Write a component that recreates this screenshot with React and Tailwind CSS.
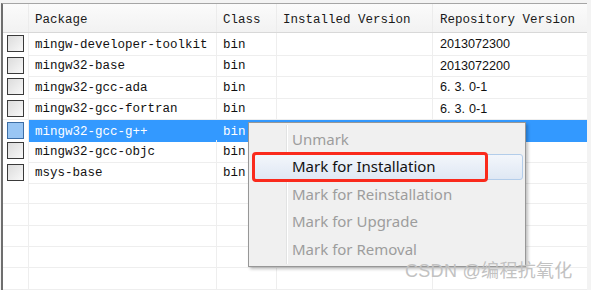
import React from "react";

const rows = [
  { name: "mingw-developer-toolkit", cls: "bin", repo: "2013072300" },
  { name: "mingw32-base", cls: "bin", repo: "2013072200" },
  { name: "mingw32-gcc-ada", cls: "bin", repo: "6.3.0-1" },
  { name: "mingw32-gcc-fortran", cls: "bin", repo: "6.3.0-1" },
  { name: "mingw32-gcc-g++", cls: "bin", repo: "", selected: true },
  { name: "mingw32-gcc-objc", cls: "bin", repo: "" },
  { name: "msys-base", cls: "bin", repo: "" },
  {}, {}, {}, {}, {},
];

const menu = [
  { label: "Unmark" },
  { label: "Mark for Installation", active: true },
  { label: "Mark for Reinstallation" },
  { label: "Mark for Upgrade" },
  { label: "Mark for Removal" },
];

const mono = "font-['Liberation_Mono',monospace]";
const cols = "grid grid-cols-[26px_188px_60px_156px_154px]";

function Checkbox({ selected }) {
  return (
    <div
      className={
        selected
          ? "w-[17px] h-[17px] border border-[#3d6ea5] bg-[#99c6f4]"
          : "w-[17px] h-[17px] border border-[#3a3a3a] bg-gradient-to-br from-[#dcdcdc] to-[#f8f8f8]"
      }
    />
  );
}

// version strings show wide dots, as in the original font
function Version({ text }) {
  const parts = text.split(".");
  return (
    <span>
      {parts.map((p, i) => (
        <React.Fragment key={i}>
          {p}
          {i < parts.length - 1 && <span className="mr-[4px]">.</span>}
        </React.Fragment>
      ))}
    </span>
  );
}

export default function App() {
  return (
    <div className="relative w-[591px] h-[290px] overflow-hidden bg-[#f3f3f3]">
      <div className="absolute left-[1px] top-[3px] w-[586px] h-[287px] bg-white border-l-2 border-l-[#6e6e6e] border-t border-t-[#a5a5a5]">
        {/* header */}
        <div className={`${cols} h-[29px] bg-gradient-to-b from-[#fbfbfb] to-[#f2f2f2] border-b border-[#d8d8d8] text-[12.5px] text-[#1a1a1a] ${mono}`}>
          <div className="border-r border-[#ececec]" />
          <div className="border-r border-[#ececec] pl-[6px] pt-[5px] flex items-center">Package</div>
          <div className="border-r border-[#ececec] pl-[6px] pt-[5px] flex items-center">Class</div>
          <div className="border-r border-[#ececec] pl-[6px] pt-[5px] flex items-center">Installed Version</div>
          <div className="pl-[7px] pt-[5px] flex items-center">Repository Version</div>
        </div>
        {rows.map((r, i) => (
          <div
            key={i}
            className={`${cols} h-[21.4px] text-[12.5px] ${mono} ${
              r.selected ? "border-t border-dotted border-t-[#e0a040]" : ""
            }`}
          >
            <div className="flex items-center justify-center border-r border-b border-[#eeeeee] bg-white">
              {r.name && <Checkbox selected={r.selected} />}
            </div>
            <div
              className={`flex items-center pl-[6px] pt-[3px] border-r border-b ${
                r.selected ? "bg-[#3399ff] text-white border-[#3399ff]" : "border-[#eeeeee] text-[#111]"
              }`}
            >
              {r.name}
            </div>
            <div
              className={`flex items-center pl-[6px] pt-[3px] border-r border-b ${
                r.selected ? "bg-[#3399ff] text-white border-[#3399ff]" : "border-[#eeeeee] text-[#111]"
              }`}
            >
              {r.cls}
            </div>
            <div
              className={`border-r border-b ${
                r.selected ? "bg-[#3399ff] border-[#3399ff]" : "border-[#eeeeee]"
              }`}
            />
            <div
              className={`flex items-center pl-[7px] pt-[2px] border-b text-[12.6px] font-['Liberation_Sans',sans-serif] ${
                r.selected ? "bg-[#3399ff] border-[#3399ff]" : "border-[#eeeeee] text-[#111]"
              }`}
            >
              {r.repo && <Version text={r.repo} />}
            </div>
          </div>
        ))}
      </div>

      {/* context menu */}
      <div className="absolute left-[248px] top-[122px] w-[278px] h-[145px] bg-[#f0f0f0] border border-[#979797] shadow-[2px_2px_3px_rgba(0,0,0,0.25)] py-[2px] font-['Noto_Sans',sans-serif]">
        <div className="absolute left-[37px] top-[2px] bottom-[2px] w-[2px] border-l border-l-[#e2e3e3] border-r border-r-white" />
        {menu.map((m) => (
          <div key={m.label} className="relative h-[27.5px] flex items-center">
            {m.active && (
              <div className="absolute left-[4px] right-[2px] top-[1px] bottom-[0px] rounded-[3px] border border-[#b3cdea] bg-gradient-to-b from-[#f3f6fb] to-[#dfe8f4]" />
            )}
            <span
              className={`relative pl-[43px] text-[15px] ${
                m.active ? "text-[#111]" : "text-[#9d9d9d]"
              }`}
            >
              {m.label}
            </span>
          </div>
        ))}
        <div className="absolute left-[3px] top-[29px] w-[236px] h-[30px] rounded-[4px] border-[3px] border-[#fa2a1c]" />
      </div>

      {/* watermark */}
      <div className="absolute left-[405px] top-[262px] text-[18px] leading-none tracking-[0.3px] text-[#c2c2c2] font-['Liberation_Sans','Noto_Sans_CJK_SC',sans-serif]">
        CSDN @编程抗氧化
      </div>
    </div>
  );
}
